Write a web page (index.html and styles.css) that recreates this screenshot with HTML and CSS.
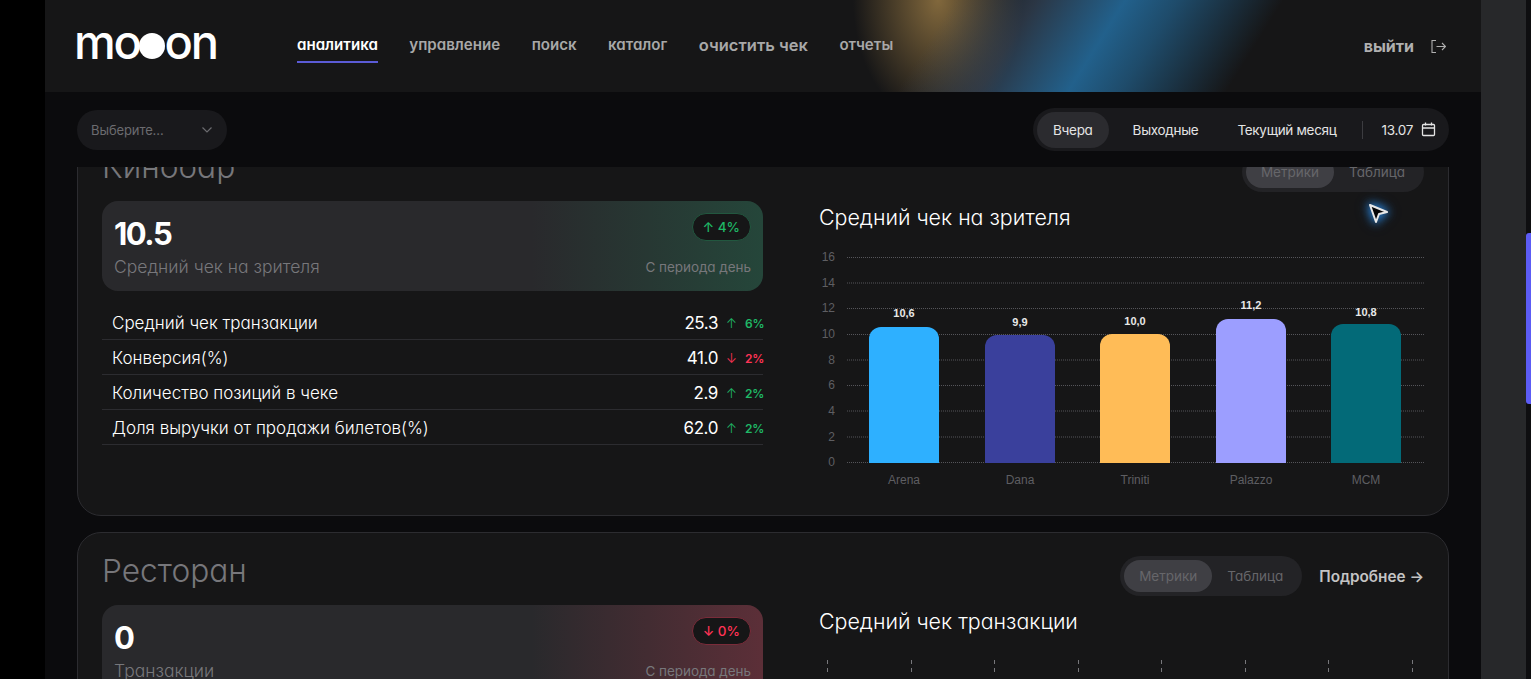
FILE: index.html
```html
<!DOCTYPE html>
<html lang="ru">
<head>
    <meta charset="UTF-8">
    <meta name="viewport" content="width=device-width, initial-scale=1.0">
    <title>mooon</title>
    <link rel="stylesheet" href="styles.css">
</head>
<body>
    <div class="app">
        <header class="topbar">
            <div class="glow"></div>
            <div class="logo">mo<span class="logo-dot"></span>on</div>
            <nav class="nav">
                <a class="nav-link active">аналитика</a>
                <a class="nav-link">управление</a>
                <a class="nav-link">поиск</a>
                <a class="nav-link">каталог</a>
                <a class="nav-link big">очистить чек</a>
                <a class="nav-link">отчеты</a>
            </nav>
            <a class="logout">выйти
                <svg width="15" height="15" viewBox="0 0 15 15" fill="none" stroke="currentColor" stroke-width="1.1"><path d="M5 1.500H1v12h4"/><path d="M5.500 7.500h9M11 4l3.500 3.500L11 11"/></svg>
            </a>
        </header>

        <div class="filters">
            <div class="select">
                <span>Выберите...</span>
                <svg width="12" height="8" viewBox="0 0 12 8" fill="none" stroke="currentColor" stroke-width="1.2"><path d="M1.500 1.500 6 6l4.500-4.500"/></svg>
            </div>
            <div class="periods">
                <span class="period active">Вчера</span>
                <span class="period">Выходные</span>
                <span class="period">Текущий месяц</span>
                <span class="period-sep"></span>
                <span class="period-date">13.07
                    <svg width="15" height="15" viewBox="0 0 15 15" fill="none" stroke="currentColor" stroke-width="1.3"><rect x="1.500" y="2.500" width="12" height="11" rx="1"/><path d="M1.500 6h12M4.500 .5v3M10.500 .5v3"/></svg>
                </span>
            </div>
        </div>

        <main class="content">
            <section class="card first">
                <div class="card-head">
                    <h2>Кинобар</h2>
                    <div class="toggle">
                        <span class="toggle-item active">Метрики</span>
                        <span class="toggle-item">Таблица</span>
                    </div>
                </div>
                <div class="card-body">
                    <div class="metrics">
                        <div class="hero good">
                            <div class="hero-row">
                                <span class="hero-value">10.5</span>
                                <span class="badge">↑ 4%</span>
                            </div>
                            <div class="hero-row">
                                <span class="hero-label">Средний чек на зрителя</span>
                                <span class="hero-note">С периода день</span>
                            </div>
                        </div>
                        <ul class="rows">
                            <li class="row"><span>Средний чек транзакции</span><b>25.3</b><i class="up">↑</i><em class="up">6%</em></li>
                            <li class="row"><span>Конверсия(%)</span><b>41.0</b><i class="down">↓</i><em class="down">2%</em></li>
                            <li class="row"><span>Количество позиций в чеке</span><b>2.9</b><i class="up">↑</i><em class="up">2%</em></li>
                            <li class="row"><span>Доля выручки от продажи билетов(%)</span><b>62.0</b><i class="up">↑</i><em class="up">2%</em></li>
                        </ul>
                    </div>
                    <div class="chart">
                        <h3>Средний чек на зрителя</h3>
                        <svg class="bars" width="614" height="250" viewBox="0 0 614 250">
                            <g class="grid">
                                <path d="M28 8.500h577M28 34h577M28 59.500h577M28 85.500h577M28 111h577M28 136.500h577M28 162h577M28 188h577M28 213.500h577"/>
                            </g>
                            <g class="y-axis">
                                <text x="16" y="12">16</text><text x="16" y="38">14</text><text x="16" y="63">12</text>
                                <text x="16" y="89">10</text><text x="16" y="115">8</text><text x="16" y="140">6</text>
                                <text x="16" y="166">4</text><text x="16" y="192">2</text><text x="16" y="217">0</text>
                            </g>
                            <path fill="#2eb0ff" d="M50 214V90a12 12 0 0 1 12-12h46a12 12 0 0 1 12 12v124z"/>
                            <path fill="#3a409c" d="M166 214V98a12 12 0 0 1 12-12h46a12 12 0 0 1 12 12v116z"/>
                            <path fill="#ffbc57" d="M281 214V97a12 12 0 0 1 12-12h46a12 12 0 0 1 12 12v117z"/>
                            <path fill="#9c9eff" d="M397 214V82a12 12 0 0 1 12-12h46a12 12 0 0 1 12 12v132z"/>
                            <path fill="#036a78" d="M512 214V87a12 12 0 0 1 12-12h46a12 12 0 0 1 12 12v127z"/>
                            <g class="bar-values">
                                <text x="85" y="68">10,6</text><text x="201" y="77">9,9</text><text x="316" y="76">10,0</text>
                                <text x="432" y="60">11,2</text><text x="547" y="67">10,8</text>
                            </g>
                            <g class="x-axis">
                                <text x="85" y="235">Arena</text><text x="201" y="235">Dana</text><text x="316" y="235">Triniti</text>
                                <text x="432" y="235">Palazzo</text><text x="547" y="235">MCM</text>
                            </g>
                        </svg>
                    </div>
                </div>
            </section>

            <section class="card">
                <div class="card-head">
                    <h2>Ресторан</h2>
                    <div class="card-tools">
                        <div class="toggle">
                            <span class="toggle-item active">Метрики</span>
                            <span class="toggle-item">Таблица</span>
                        </div>
                        <a class="more">Подробнее →</a>
                    </div>
                </div>
                <div class="card-body">
                    <div class="metrics">
                        <div class="hero bad">
                            <div class="hero-row">
                                <span class="hero-value">0</span>
                                <span class="badge">↓ 0%</span>
                            </div>
                            <div class="hero-row">
                                <span class="hero-label">Транзакции</span>
                                <span class="hero-note">С периода день</span>
                            </div>
                        </div>
                    </div>
                    <div class="chart">
                        <h3>Средний чек транзакции</h3>
                        <div class="ticks">
                            <span></span><span></span><span></span><span></span><span></span><span></span><span></span><span></span>
                        </div>
                    </div>
                </div>
            </section>
        </main>

        <svg class="cursor" width="24" height="24" viewBox="0 0 24 24"><path d="M4 4l17 7-8 2-3 8z" fill="#050506" stroke="#e8e8e8" stroke-width="2" stroke-linejoin="round"/></svg>
    </div>
    <div class="scrollbar"><div class="scroll-track"><div class="scroll-thumb"></div></div></div>
</body>
</html>
```

FILE: styles.css
```css
* {
    box-sizing: border-box;
}
html, body {
    height: 100%;
}
body {
    margin: 0;
    padding-left: 45px;
    display: flex;
    overflow: hidden;
    background-color: #000;
    color: #fff;
    font-family: Inter, "Noto Sans", sans-serif;
    font-feature-settings: "cv11";
}
.app {
    position: relative;
    flex: 0 0 1436px;
    height: 679px;
    display: flex;
    flex-direction: column;
    overflow: hidden;
    background-color: #0b0b0d;
}
.topbar {
    position: relative;
    flex: 0 0 92px;
    display: flex;
    align-items: center;
    padding: 0 32px;
    overflow: hidden;
    background-color: #161617;
    background-image: radial-gradient(ellipse 85px 125px at 893px 0, rgba(135, 108, 62, .95), rgba(135, 108, 62, 0));
}
.glow {
    position: absolute;
    left: 880px;
    top: 0;
    width: 330px;
    height: 92px;
    transform: skewX(-32deg);
    background: linear-gradient(90deg, rgba(60, 75, 95, 0), rgba(60, 80, 105, .55) 25%, rgba(34, 98, 142, .98) 52%, rgba(34, 98, 142, .7) 68%, rgba(34, 98, 142, 0));
}
.logo, .nav, .logout {
    position: relative;
}
.logo {
    width: 220px;
    margin-left: -3px;
    margin-right: 3px;
    display: flex;
    align-items: center;
    font-size: 47px;
    font-weight: 500;
    letter-spacing: -2.300px;
    line-height: 1;
    margin-top: -9px;
}
.logo-dot {
    width: 26px;
    height: 26px;
    margin: 9px 0 0 -1px;
    border-radius: 50%;
    background-color: #fff;
}
.nav {
    display: flex;
    align-items: flex-end;
    gap: 31.500px;
    margin-top: 5px;
}
.nav-link {
    padding-bottom: 7px;
    border-bottom: 2px solid transparent;
    font-size: 15.100px;
    font-weight: 600;
    color: #a8a8a8;
}
.nav-link.big {
    padding-bottom: 6px;
    font-size: 16.500px;
}
.nav-link.active {
    color: #fff;
    border-bottom-color: #5b5bd6;
}
.logout {
    margin-left: auto;
    margin-right: 3px;
    display: flex;
    align-items: center;
    gap: 17px;
    font-size: 16px;
    font-weight: 700;
    color: #b0b0b0;
}
.filters {
    flex: 0 0 75px;
    display: flex;
    align-items: center;
    justify-content: space-between;
    padding: 0 32px;
    position: relative;
    z-index: 2;
    background-color: #0b0b0d;
}
.select {
    width: 150px;
    height: 40px;
    padding: 0 14px;
    display: flex;
    align-items: center;
    justify-content: space-between;
    border-radius: 20px;
    background-color: #19191c;
    font-size: 13px;
    letter-spacing: -.1px;
    color: #6b6b6f;
}
.periods {
    height: 43px;
    padding: 0 13px 0 4px;
    display: flex;
    align-items: center;
    border-radius: 22px;
    background-color: #19191c;
    font-size: 13.500px;
    letter-spacing: -.3px;
    color: #e4e4e4;
}
.period {
    padding: 10px 15px;
    margin-right: 9px;
    border-radius: 18px;
}
.period.active {
    padding: 10px 16px;
    background-color: #2b2b2f;
}
.period-sep {
    width: 1px;
    height: 18px;
    margin: 0 19px 0 1px;
    background-color: #3c3c40;
}
.period-date {
    display: flex;
    align-items: center;
    gap: 8px;
}
.content {
    flex: 1;
    overflow: hidden;
    padding: 0 32px;
}
.card {
    height: 388px;
    margin-bottom: 16px;
    padding: 17px 24px 0;
    border: 1px solid #2c2c30;
    border-radius: 24px;
    background-color: #161617;
}
.card.first {
    margin-top: -39px;
}
.card-head {
    height: 52px;
    display: flex;
    align-items: center;
    justify-content: space-between;
}
.card-head h2 {
    margin: 0 0 12px;
    font-size: 31.700px;
    font-weight: 300;
    color: #77777b;
}
.card-tools {
    display: flex;
    align-items: center;
    gap: 17px;
}
.toggle {
    height: 40px;
    padding: 4px;
    display: flex;
    border-radius: 20px;
    background-color: #232326;
    font-size: 13.500px;
    color: #66666a;
}
.toggle-item {
    padding: 0 15px;
    line-height: 32px;
    border-radius: 16px;
}
.toggle-item.active {
    background-color: #3f3f44;
}
.more {
    font-size: 15.300px;
    font-weight: 600;
    color: #c4c4c4;
}
.card-body {
    display: flex;
    margin-top: 3px;
}
.metrics {
    flex: 0 0 661px;
}
.hero {
    height: 90px;
    padding: 12px 12px 0;
    border-radius: 16px;
}
.hero.good {
    background: linear-gradient(90deg, #29292c 65%, #25463a);
}
.hero.bad {
    background: linear-gradient(90deg, #29292c 65%, #5c2f38);
}
.hero-row {
    display: flex;
    align-items: center;
    justify-content: space-between;
}
.hero-row:first-child {
    align-items: flex-start;
}
.hero-value {
    margin-top: 2px;
    font-size: 31px;
    font-weight: 700;
    letter-spacing: -1.500px;
}
.badge {
    height: 28px;
    padding: 0 10px;
    border-radius: 14px;
    font-size: 13.500px;
    font-weight: 500;
    line-height: 26px;
    background-color: #161617;
    border: 1px solid;
}
.hero.good .badge {
    color: #1fb866;
    border-color: #22573f;
}
.hero.bad .badge {
    color: #ff3355;
    border-color: #7a2c3a;
}
.hero-label {
    margin-top: 4px;
    font-size: 17.500px;
    font-weight: 300;
    color: #77777b;
}
.hero-note {
    margin-top: 4px;
    font-size: 13.500px;
    letter-spacing: -.05px;
    color: #77777b;
}
.rows {
    list-style: none;
    margin: 14px 0 0;
    padding: 0;
}
.row {
    height: 35px;
    padding: 2px 0 0 10px;
    display: flex;
    align-items: center;
    border-bottom: 1px solid #2c2c30;
    font-size: 17px;
    font-weight: 300;
}
.row span {
    flex: 1;
}
.row b {
    font-weight: 400;
    letter-spacing: -.4px;
}
.row i {
    width: 27px;
    text-align: center;
    font-size: 13px;
    font-style: normal;
}
.row em {
    width: 18px;
    text-align: right;
    font-size: 12px;
    font-weight: 600;
    letter-spacing: -.3px;
    font-style: normal;
}
.up {
    color: #1fb866;
}
.down {
    color: #ff3355;
}
.chart {
    flex: 1;
    padding-left: 56px;
}
.chart h3 {
    margin: -1px 0 15px;
    font-size: 21.400px;
    font-weight: 300;
    line-height: 34px;
}
.bars {
    display: block;
}
.grid path {
    stroke: #55555a;
    stroke-width: 1;
    stroke-dasharray: 1 1;
    fill: none;
}
.bars text {
    font-family: "Liberation Sans", Arial, sans-serif;
    font-size: 12px;
    fill: #5e5e62;
    text-anchor: middle;
}
.y-axis text {
    text-anchor: end;
}
.bars .bar-values text {
    font-size: 11px;
    font-weight: 700;
    fill: #e8e8e8;
}
.ticks {
    display: flex;
    justify-content: space-between;
    padding: 0 11px 0 8px;
    margin-top: 22px;
}
.ticks span {
    width: 1px;
    height: 14px;
    background-image: repeating-linear-gradient(#77777b 0 4px, transparent 4px 8px);
}
.cursor {
    position: absolute;
    left: 1321px;
    top: 201px;
    filter: drop-shadow(0 0 5px #2a7fd0) drop-shadow(0 0 5px #1f5f9c);
}
.scrollbar {
    flex: 1;
    display: flex;
    justify-content: flex-end;
    background-color: #27282a;
}
.scroll-track {
    width: 5px;
    padding-top: 233px;
    background-color: #0e0e10;
}
.scroll-thumb {
    height: 171px;
    border-radius: 3px 0 0 3px;
    background-color: #5c5cf5;
}
```
